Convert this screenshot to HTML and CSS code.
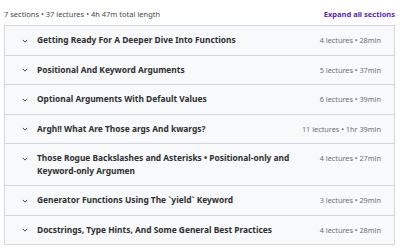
FILE: index.html
```html
<!DOCTYPE html>
<html>
<head>
<meta charset="utf-8">
<link rel="stylesheet" href="styles.css">
</head>
<body>
<div class="curriculum">
  <div class="summary">
    <span class="stats">7 sections • 37 lectures • 4h 47m total length</span>
    <span class="expand">Expand all sections</span>
  </div>
  <div class="sections">
    <div class="section">
      <svg class="chev" viewBox="0 0 8 5" width="6" height="4"><path d="M1 1 L4 4 L7 1" fill="none" stroke="#2d2f31" stroke-width="1.2"/></svg>
      <span class="title">Getting Ready For A Deeper Dive Into Functions</span>
      <span class="meta">4 lectures • 28min</span>
    </div>
    <div class="section">
      <svg class="chev" viewBox="0 0 8 5" width="6" height="4"><path d="M1 1 L4 4 L7 1" fill="none" stroke="#2d2f31" stroke-width="1.2"/></svg>
      <span class="title">Positional And Keyword Arguments</span>
      <span class="meta">5 lectures • 37min</span>
    </div>
    <div class="section">
      <svg class="chev" viewBox="0 0 8 5" width="6" height="4"><path d="M1 1 L4 4 L7 1" fill="none" stroke="#2d2f31" stroke-width="1.2"/></svg>
      <span class="title">Optional Arguments With Default Values</span>
      <span class="meta">6 lectures • 39min</span>
    </div>
    <div class="section">
      <svg class="chev" viewBox="0 0 8 5" width="6" height="4"><path d="M1 1 L4 4 L7 1" fill="none" stroke="#2d2f31" stroke-width="1.2"/></svg>
      <span class="title">Argh!! What Are Those args And kwargs?</span>
      <span class="meta">11 lectures • 1hr 39min</span>
    </div>
    <div class="section">
      <svg class="chev" viewBox="0 0 8 5" width="6" height="4"><path d="M1 1 L4 4 L7 1" fill="none" stroke="#2d2f31" stroke-width="1.2"/></svg>
      <span class="title">Those Rogue Backslashes and Asterisks • Positional-only and Keyword-only Argumen</span>
      <span class="meta">4 lectures • 27min</span>
    </div>
    <div class="section">
      <svg class="chev" viewBox="0 0 8 5" width="6" height="4"><path d="M1 1 L4 4 L7 1" fill="none" stroke="#2d2f31" stroke-width="1.2"/></svg>
      <span class="title">Generator Functions Using The `yield` Keyword</span>
      <span class="meta">3 lectures • 29min</span>
    </div>
    <div class="section">
      <svg class="chev" viewBox="0 0 8 5" width="6" height="4"><path d="M1 1 L4 4 L7 1" fill="none" stroke="#2d2f31" stroke-width="1.2"/></svg>
      <span class="title">Docstrings, Type Hints, And Some General Best Practices</span>
      <span class="meta">4 lectures • 28min</span>
    </div>
  </div>
</div>
</body>
</html>
```

FILE: styles.css
```css
html, body {
  margin: 0;
  padding: 0;
  background: #ffffff;
}
body {
  font-family: "Noto Sans", "Liberation Sans", sans-serif;
  color: #2d2f31;
}
.curriculum {
  padding: 8px 5px 0 4px;
}
.summary {
  display: flex;
  justify-content: space-between;
  align-items: center;
  height: 12px;
  margin-bottom: 5px;
}
.stats {
  font-size: 7.5px;
  color: #45484b;
}
.expand {
  font-size: 7.5px;
  font-weight: 700;
  color: #5624d0;
}
.sections {
  border: 1px solid #d1d7dc;
  border-bottom: none;
}
.section {
  display: flex;
  align-items: flex-start;
  background: #f7f9fa;
  border-bottom: 1px solid #d1d7dc;
  padding: 8px 13px 8px 17px;
  line-height: 12.5px;
}
.chev {
  flex: none;
  margin-top: 4.5px;
  margin-right: 9px;
}
.title {
  flex: 1;
  font-size: 8.4px;
  font-weight: 700;
  color: #2d2f31;
  padding-right: 20px;
}
.meta {
  flex: none;
  font-size: 7.3px;
  color: #6a6f73;
}
```
